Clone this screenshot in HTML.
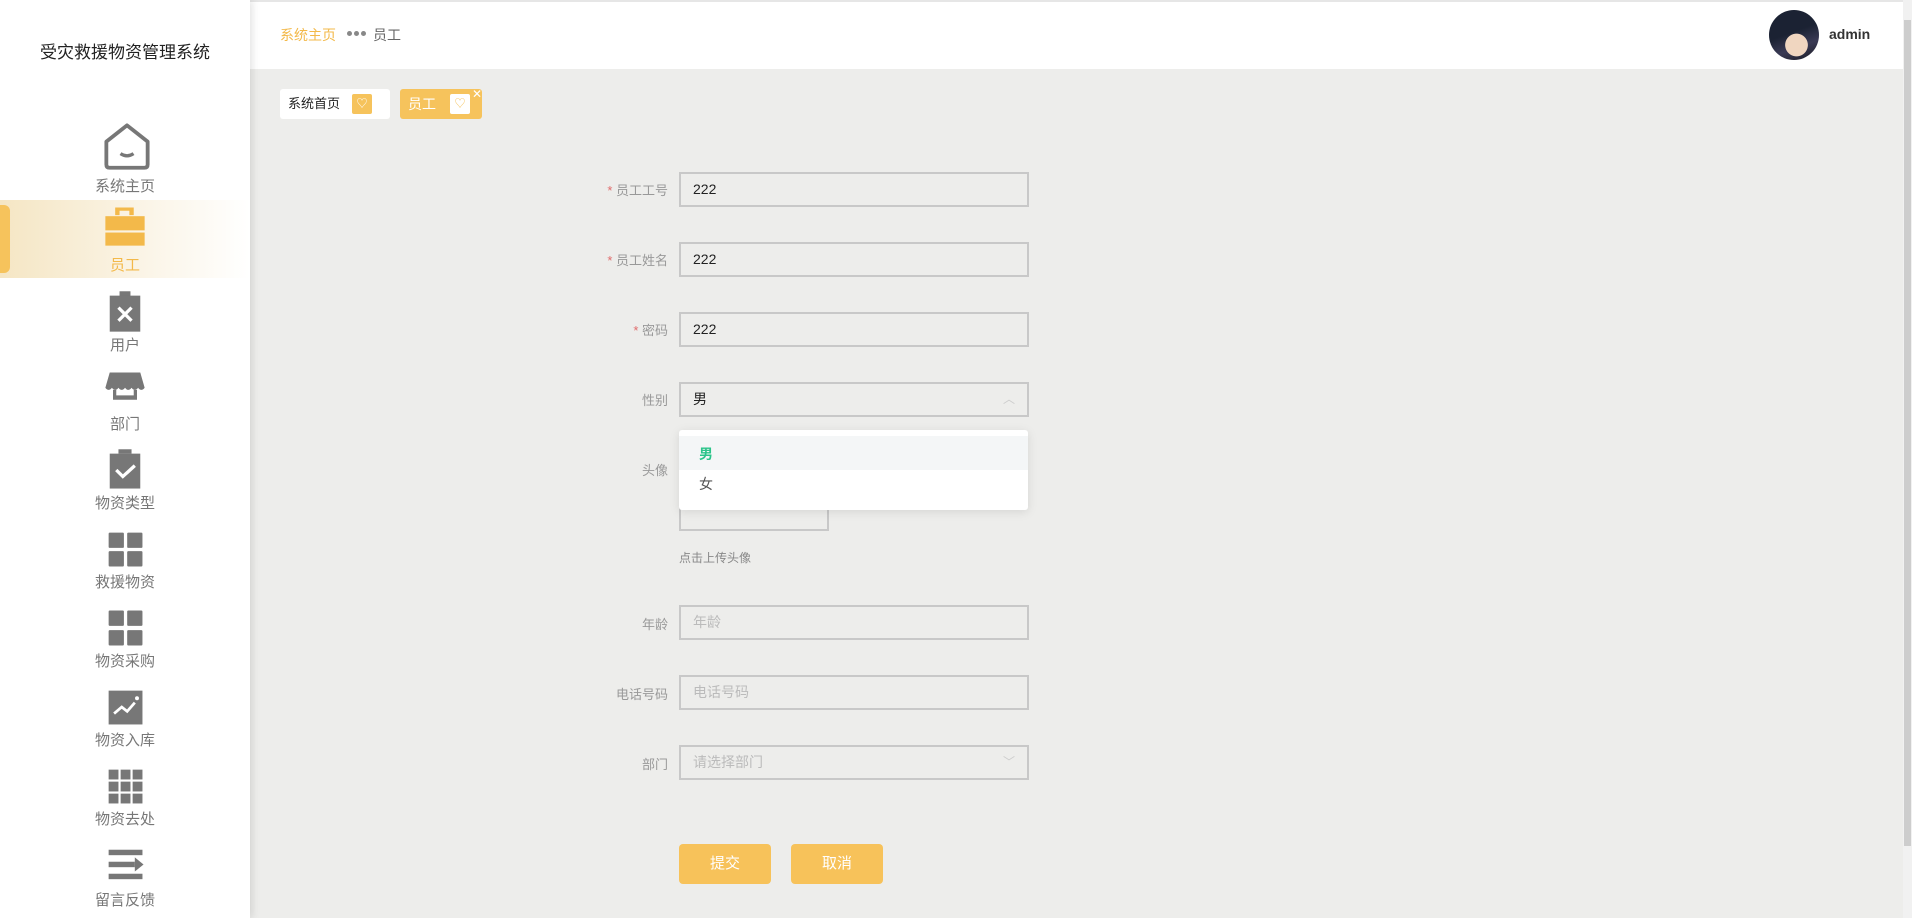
<!DOCTYPE html>
<html><head><meta charset="utf-8"><style>
*{box-sizing:border-box;margin:0;padding:0}
body{width:1912px;height:918px;overflow:hidden;background:#ededeb;font-family:"Liberation Sans","Noto Sans CJK SC",sans-serif;position:relative}
.side{position:absolute;left:0;top:0;width:250px;height:918px;background:#fff;box-shadow:2px 0 8px rgba(0,0,0,.12);z-index:2}
.title{position:absolute;left:0;width:250px;top:38px;text-align:center;font-size:17px;color:#222}
.item{position:absolute;left:0;width:250px;height:78px;text-align:center}
.item svg{position:absolute;left:103px;top:2px}
.item span{position:absolute;left:0;width:250px;top:49px;font-size:15px;color:#777}
.active{background:linear-gradient(90deg,#f5e6c4,#fbf5e8 60%,#fff)}
.active span{color:#f3b94a}
.ind{position:absolute;left:0;top:205px;width:10px;height:68px;background:#f6c35c;border-radius:0 6px 6px 0}
.head{position:absolute;left:250px;top:0;right:0;height:69px;background:#fff;border-top:2px solid #e6e6e6}
.crumb{position:absolute;left:280px;top:25px;font-size:14px}
.tag{position:absolute;top:89px;height:30px;border-radius:3px;font-size:13px;line-height:30px}
.lbl{position:absolute;right:calc(1912px - 668px);font-size:13px;color:#999;text-align:right}
.lbl b{color:#e06c6c;font-weight:normal}
.inp{position:absolute;left:679px;width:350px;height:35px;border:2px solid #c8c8c8;background:#ededeb;font-size:14px;line-height:31px;padding-left:12px;color:#222}
.ph{color:#bbb}
.btn{position:absolute;top:844px;width:92px;height:40px;background:#f7c25a;color:#fff;border-radius:4px;font-size:15px;text-align:center;line-height:40px}
.dot{position:absolute;top:31px;width:5px;height:5px;border-radius:50%;background:#888}
</style></head><body>
<div class="side">
<div class="title">受灾救援物资管理系统</div>
<div class="item" style="top:119px"><svg width="48" height="50" viewBox="0 0 44 46"><path d="M3 19 L22 4 L41 19 L41 40 Q41 43 38 43 L6 43 Q3 43 3 40 Z" fill="none" stroke="#777" stroke-width="3.5" stroke-linejoin="round"/><path d="M16 30 Q22 34 28 30" fill="none" stroke="#777" stroke-width="3"/></svg><span style="top:56px">系统主页</span></div>
<div class="item active" style="top:200px"><svg width="44" height="48" viewBox="0 0 40 44"><path d="M11 12V5h17v7h-4V8h-9v4z" fill="#f3b94a"/><rect x="2" y="13" width="36" height="13" fill="#f3b94a"/><rect x="2" y="28" width="36" height="12" fill="#f3b94a"/></svg><span style="top:54px">员工</span></div>
<div class="ind"></div>
<div class="item" style="top:286px"><svg width="44" height="48" viewBox="0 0 40 44"><rect x="15" y="3" width="10" height="5" fill="#777"/><rect x="6" y="7" width="28" height="33" fill="#777"/><path d="M14 18l12 12M26 18l-12 12" stroke="#fff" stroke-width="3"/></svg><span style="top:48px">用户</span></div>
<div class="item" style="top:365px"><svg width="44" height="48" viewBox="0 0 40 44"><path d="M6 5h28l4 14q-3 4-6 0q-3 4-6 0q-3 4-6 0q-3 4-6 0q-3 4-6 0q-3 4-6 0z" fill="#777"/><path d="M9 21v9h22v-9h-3v5H12v-5z" fill="#777"/></svg><span style="top:48px">部门</span></div>
<div class="item" style="top:444px"><svg width="44" height="48" viewBox="0 0 40 44"><rect x="14" y="3" width="12" height="4" fill="#777"/><rect x="6" y="7" width="28" height="32" fill="#777"/><path d="M12 22l6 6 11-10" fill="none" stroke="#fff" stroke-width="3"/></svg><span style="top:48px">物资类型</span></div>
<div class="item" style="top:523px"><svg width="44" height="48" viewBox="0 0 40 44"><rect x="5" y="7" width="14" height="14" rx="1" fill="#777"/><rect x="22" y="7" width="14" height="14" rx="1" fill="#777"/><rect x="5" y="24" width="14" height="14" rx="1" fill="#777"/><rect x="22" y="24" width="14" height="14" rx="1" fill="#777"/></svg><span style="top:48px">救援物资</span></div>
<div class="item" style="top:602px"><svg width="44" height="48" viewBox="0 0 40 44"><rect x="5" y="6" width="14" height="14" rx="1" fill="#777"/><rect x="22" y="6" width="14" height="14" rx="1" fill="#777"/><rect x="5" y="24" width="14" height="14" rx="1" fill="#777"/><rect x="22" y="24" width="14" height="14" rx="1" fill="#777"/></svg><span style="top:48px">物资采购</span></div>
<div class="item" style="top:681px"><svg width="44" height="48" viewBox="0 0 40 44"><rect x="5" y="7" width="31" height="31" fill="#777"/><path d="M10 28l7-6 5 4 7-8" fill="none" stroke="#fff" stroke-width="2.5"/><circle cx="31" cy="14" r="1.8" fill="#fff"/></svg><span style="top:48px">物资入库</span></div>
<div class="item" style="top:760px"><svg width="44" height="48" viewBox="0 0 40 44"><g fill="#777"><rect x="5" y="7" width="9" height="9"/><rect x="16" y="7" width="9" height="9"/><rect x="27" y="7" width="9" height="9"/><rect x="5" y="18" width="9" height="9"/><rect x="16" y="18" width="9" height="9"/><rect x="27" y="18" width="9" height="9"/><rect x="5" y="29" width="9" height="9"/><rect x="16" y="29" width="9" height="9"/><rect x="27" y="29" width="9" height="9"/></g></svg><span style="top:48px">物资去处</span></div>
<div class="item" style="top:839px"><svg width="44" height="48" viewBox="0 0 40 44"><g fill="#777"><rect x="5" y="8" width="31" height="5"/><rect x="5" y="19" width="24" height="5"/><path d="M29 15l8 6.5-8 6.5z"/><rect x="5" y="30" width="31" height="5"/></g></svg><span style="top:50px">留言反馈</span></div>
</div>
<div class="head">
<div style="position:absolute;left:1519px;top:8px;width:50px;height:50px;border-radius:50%;background:radial-gradient(circle at 55% 70%,#f0d6c0 0 25%,transparent 26%),linear-gradient(160deg,#1b2233 0 45%,#3a3a55 70%,#1a1a22);"></div>
<div style="position:absolute;left:1579px;top:24px;font-size:14px;font-weight:bold;color:#333">admin</div>
</div>
<div style="position:absolute;right:0;top:0;width:9px;height:918px;background:#f1f1f1;z-index:3"></div>
<div style="position:absolute;right:1px;top:20px;width:7px;height:826px;background:#cdcdcd;z-index:3"></div>
<div class="crumb" style="color:#f3b94a">系统主页</div>
<div class="dot" style="left:347px"></div><div class="dot" style="left:354px"></div><div class="dot" style="left:361px"></div>
<div class="crumb" style="left:373px;color:#666">员工</div>
<div class="tag" style="left:280px;width:110px;background:#fff;color:#222;padding-left:8px">系统首页<span style="position:absolute;left:72px;top:5px;width:20px;height:20px;background:#f6c35c;border-radius:2px;color:#fff;font-size:11px;line-height:20px;text-align:center">♡</span></div>
<div class="tag" style="left:400px;width:82px;background:#f6c35c;color:#fff;padding-left:8px;font-size:14px">员工<span style="position:absolute;left:50px;top:5px;width:20px;height:20px;background:#fff;border-radius:2px;color:#f6c35c;font-size:11px;line-height:20px;text-align:center">♡</span><span style="position:absolute;left:72px;top:-10px;font-size:12px">✕</span></div>
<div class="lbl" style="top:180px"><b>* </b>员工工号</div>
<div class="inp" style="top:172px">222</div>
<div class="lbl" style="top:250px"><b>* </b>员工姓名</div>
<div class="inp" style="top:242px">222</div>
<div class="lbl" style="top:320px"><b>* </b>密码</div>
<div class="inp" style="top:312px">222</div>
<div class="lbl" style="top:390px">性别</div>
<div class="inp" style="top:382px">男<span style="position:absolute;right:12px;top:0;color:#ccc;font-size:12px">︿</span></div>
<div class="lbl" style="top:460px">头像</div>
<div style="position:absolute;left:679px;top:480px;width:150px;height:51px;border:2px solid #c8c8c8;border-top:none"></div>
<div style="position:absolute;left:679px;top:549px;font-size:12px;color:#888">点击上传头像</div>
<div style="position:absolute;left:679px;top:430px;width:349px;height:80px;background:#fff;border-radius:3px;box-shadow:0 2px 10px rgba(0,0,0,.1)">
<div style="position:absolute;left:0;top:6px;width:349px;height:34px;background:#f4f6f7"></div>
<div style="position:absolute;left:20px;top:14px;font-size:14px;color:#2bc48a;font-weight:bold">男</div>
<div style="position:absolute;left:20px;top:44px;font-size:14px;color:#555">女</div>
</div>
<div class="lbl" style="top:614px">年龄</div>
<div class="inp ph" style="top:605px">年龄</div>
<div class="lbl" style="top:684px">电话号码</div>
<div class="inp ph" style="top:675px">电话号码</div>
<div class="lbl" style="top:754px">部门</div>
<div class="inp ph" style="top:745px">请选择部门<span style="position:absolute;right:12px;top:0;color:#ccc;font-size:12px">﹀</span></div>
<div class="btn" style="left:679px">提交</div>
<div class="btn" style="left:791px">取消</div>
</body></html>
